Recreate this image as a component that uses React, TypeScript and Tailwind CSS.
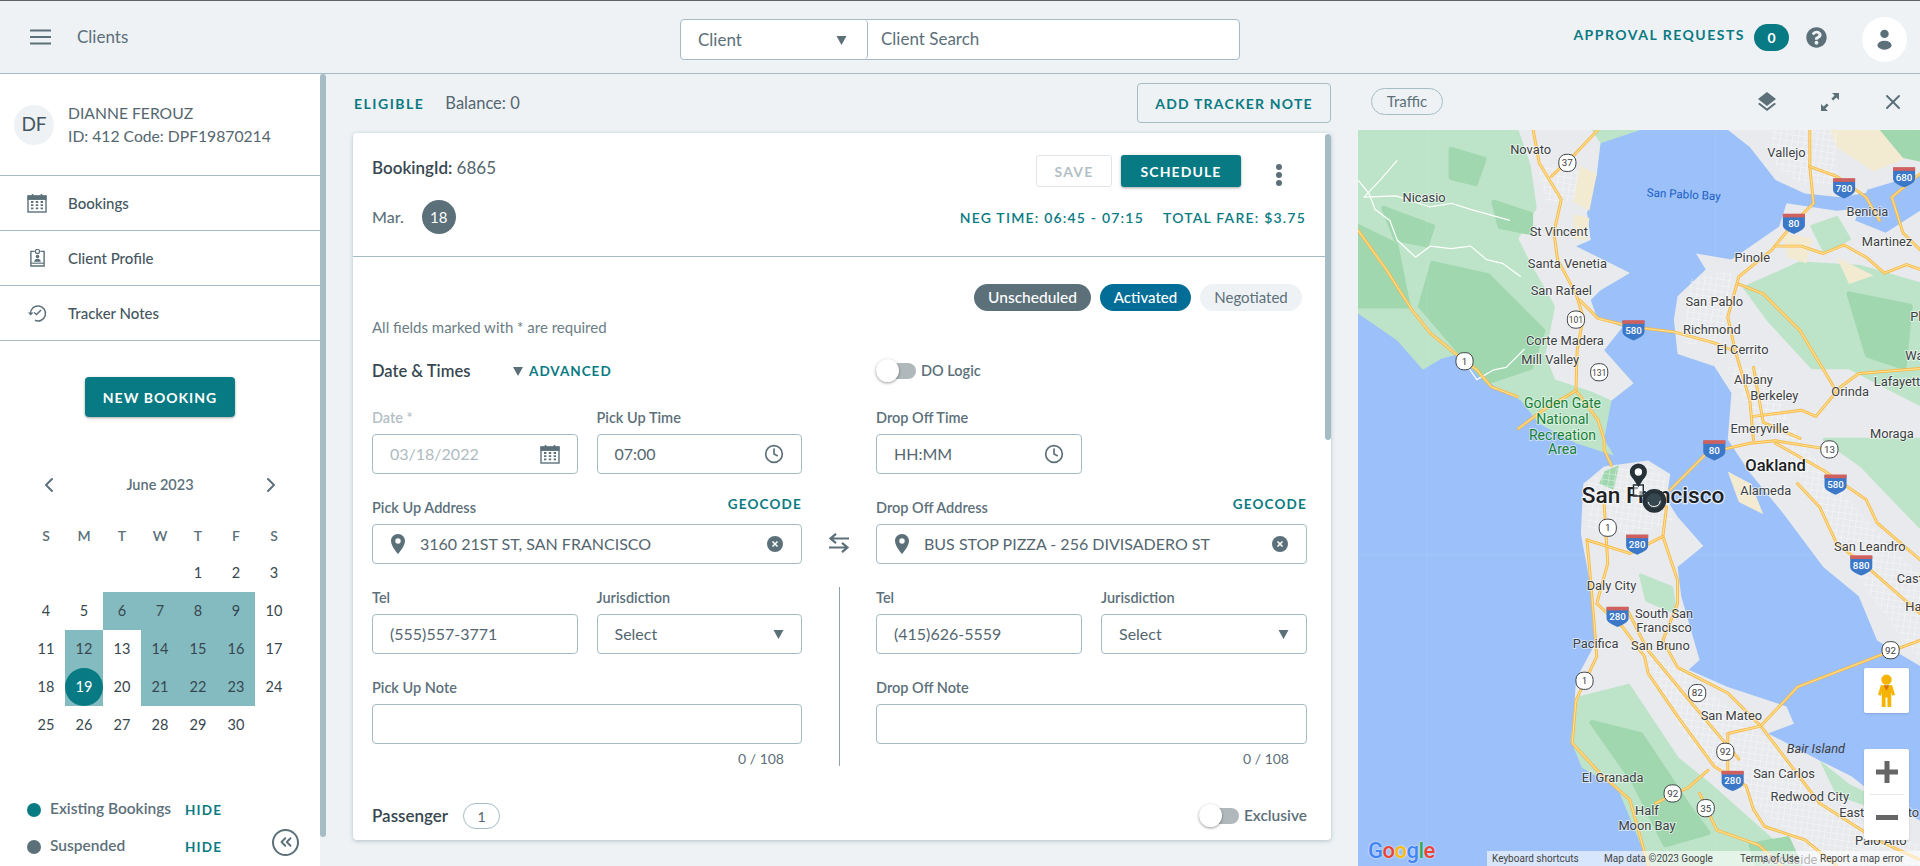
import { ChevronLeft, ChevronRight, ChevronsLeft, Clock, X } from "lucide-react";
import { FaQuestionCircle } from "react-icons/fa";
import { MdLayers } from "react-icons/md";

const weekdays = ["S", "M", "T", "W", "T", "F", "S"];
const shaded = [6, 7, 8, 9, 12, 14, 15, 16, 21, 22, 23];
const days: (number | null)[] = [
  null, null, null, null, 1, 2, 3,
  4, 5, 6, 7, 8, 9, 10,
  11, 12, 13, 14, 15, 16, 17,
  18, 19, 20, 21, 22, 23, 24,
  25, 26, 27, 28, 29, 30, null,
];

function Triangle({ className }: { className?: string }) {
  return (
    <svg viewBox="0 0 10 10" className={className}>
      <path d="M0 1h10L5 10z" fill="#5c707a" />
    </svg>
  );
}

function CalendarIcon({ className }: { className?: string }) {
  return (
    <svg viewBox="0 0 20 20" className={className} fill="none" stroke="#5c707a">
      <rect x="1" y="3" width="18" height="16" strokeWidth="1.4" />
      <rect x="1" y="3" width="18" height="3.4" fill="#5c707a" strokeWidth="1" />
      <path d="M5.5 1v3M14.5 1v3" strokeWidth="1.6" />
      <path d="M4 9h2.4M8.8 9h2.4M13.6 9h2.4M4 12.2h2.4M8.8 12.2h2.4M13.6 12.2h2.4M4 15.4h2.4M8.8 15.4h2.4M13.6 15.4h2.4" strokeWidth="1.8" />
    </svg>
  );
}

function ProfileIcon() {
  return (
    <svg viewBox="0 0 18 20" className="h-5 w-[17px]" fill="none" stroke="#5c707a">
      <path d="M6 3H2v15.5h14V3h-4" strokeWidth="1.5" />
      <rect x="7" y="1" width="4" height="4" rx="1" strokeWidth="1.3" />
      <path d="M2 15.5h14" strokeWidth="1.2" />
      <circle cx="9" cy="8.5" r="1.9" fill="#5c707a" stroke="none" />
      <path d="M5.5 14c.2-2.4 1.6-3 3.5-3s3.3.6 3.5 3z" fill="#5c707a" stroke="none" />
    </svg>
  );
}

function HistoryIcon() {
  return (
    <svg viewBox="0 0 20 20" className="h-5 w-5" fill="none" stroke="#5c707a" strokeWidth="1.5">
      <path d="M3.5 10.5A7.5 7.5 0 1 1 8 17.3" />
      <path d="M1 9.5l2.7 3 2.8-3" fill="#5c707a" stroke="none" />
      <path d="M7 9.5l2.5 2L14 7" />
    </svg>
  );
}

function PinIcon() {
  return (
    <svg viewBox="0 0 14 20" className="h-5 w-[14px] shrink-0">
      <path
        fillRule="evenodd"
        d="M7 0C3.1 0 0 3.1 0 7c0 5.2 7 13 7 13s7-7.8 7-13c0-3.9-3.1-7-7-7zm0 9.7A2.7 2.7 0 1 1 7 4.3a2.7 2.7 0 0 1 0 5.4z"
        fill="#5c707a"
      />
    </svg>
  );
}

function ClearIcon() {
  return (
    <svg viewBox="0 0 16 16" className="h-4 w-4 shrink-0">
      <circle cx="8" cy="8" r="8" fill="#5c707a" />
      <path d="M5.5 5.5l5 5M10.5 5.5l-5 5" stroke="#fff" strokeWidth="1.5" />
    </svg>
  );
}

function Toggle() {
  return (
    <div className="relative h-[16px] w-[40px] rounded-full bg-[#b0b8bc]">
      <div className="absolute left-0 top-[-4px] h-[23px] w-[23px] rounded-full bg-white shadow-[0_1px_3px_rgba(0,0,0,0.4)]" />
    </div>
  );
}

function Label({ children, muted }: { children: React.ReactNode; muted?: boolean }) {
  return (
    <div className={`flex h-5 items-center text-[14.5px] font-semibold ${muted ? "text-[#b3bfc5]" : "text-[#5c707a]"}`}>
      {children}
    </div>
  );
}

function Field({ className, children }: { className?: string; children?: React.ReactNode }) {
  return (
    <div className={`mt-1.5 flex h-10 items-center rounded-[4px] border border-[#a6bcc5] bg-white px-[17px] text-[16px] text-[#546670] ${className ?? ""}`}>
      {children}
    </div>
  );
}

function Address({ label, value }: { label: string; value: string }) {
  return (
    <div className="mt-6">
      <div className="flex items-start justify-between">
        <Label>{label}</Label>
        <span className="-mt-1 text-[13.5px] font-bold tracking-[1.2px] text-[#0a7a83]">GEOCODE</span>
      </div>
      <Field className="gap-[15px] !px-[18px]">
        <PinIcon />
        <span className="flex-1">{value}</span>
        <ClearIcon />
      </Field>
    </div>
  );
}

function ContactFields({ tel }: { tel: string }) {
  return (
    <div className="mt-6 flex gap-[19px]">
      <div className="w-[206px]">
        <Label>Tel</Label>
        <Field>{tel}</Field>
      </div>
      <div className="w-[206px]">
        <Label>Jurisdiction</Label>
        <Field className="justify-between">
          Select
          <Triangle className="h-[10px] w-[11px]" />
        </Field>
      </div>
    </div>
  );
}

function Note({ label }: { label: string }) {
  return (
    <div className="mt-6">
      <Label>{label}</Label>
      <Field />
      <div className="mt-1 flex h-5 items-center justify-end pr-[18px] text-[14px] text-[#5c707a]">0 / 108</div>
    </div>
  );
}

function Sidebar() {
  return (
    <aside className="flex w-[330px] shrink-0">
      <div className="w-[320px] bg-white">
        <div className="flex h-[102px] items-center gap-[14px] border-b border-[#a6bcc5] pl-[14px]">
          <div className="flex h-10 w-10 items-center justify-center rounded-full bg-[#eef2f5] text-[19px] text-[#45565f]">DF</div>
          <div className="text-[15.7px] leading-[23px] text-[#546670]">
            <div>DIANNE FEROUZ</div>
            <div>ID: 412 Code: DPF19870214</div>
          </div>
        </div>
        {[
          { label: "Bookings", icon: <CalendarIcon className="h-5 w-5" /> },
          { label: "Client Profile", icon: <ProfileIcon /> },
          { label: "Tracker Notes", icon: <HistoryIcon /> },
        ].map((item) => (
          <div key={item.label} className="flex h-[55px] items-center border-b border-[#a6bcc5]">
            <div className="flex w-[68px] justify-center pl-[6px]">{item.icon}</div>
            <span className="text-[15px] font-medium text-[#45565f]">{item.label}</span>
          </div>
        ))}
        <div className="mt-[36px] flex justify-center">
          <button className="h-10 w-[150px] rounded-[4px] bg-[#087a83] text-[14px] font-bold tracking-[1px] text-white shadow-[0_1px_3px_rgba(0,0,0,0.35)]">
            NEW BOOKING
          </button>
        </div>
        <div className="ml-[37px] mt-[56px] flex h-6 w-[246px] items-center justify-between">
          <ChevronLeft className="h-6 w-6 text-[#5c707a]" />
          <span className="text-[14.5px] font-semibold text-[#5c707a]">June 2023</span>
          <ChevronRight className="h-6 w-6 text-[#5c707a]" />
        </div>
        <div className="ml-[27px] mt-[19px] grid w-[266px] grid-cols-7">
          {weekdays.map((d, i) => (
            <div key={i} className="flex h-[38px] items-center justify-center text-[14px] font-semibold text-[#5c707a]">
              {d}
            </div>
          ))}
          {days.map((d, i) => (
            <div
              key={i}
              className={`flex h-[38px] items-center justify-center text-[14.5px] text-[#37474f] ${
                d !== null && (shaded.includes(d) || d === 19) ? "bg-[#84bbc0]" : ""
              }`}
            >
              {d === 19 ? (
                <span className="flex h-[38px] w-[38px] items-center justify-center rounded-full bg-[#087a83] text-white">19</span>
              ) : (
                d
              )}
            </div>
          ))}
        </div>
        <div className="ml-[27px] mt-[56px] flex h-5 items-center">
          <span className="h-[14px] w-[14px] rounded-full bg-[#087a83]" />
          <span className="ml-[9px] w-[135px] -translate-y-px text-[15.5px] font-semibold text-[#5c707a]">Existing Bookings</span>
          <span className="text-[13.5px] font-bold tracking-[1.2px] text-[#0a7a83]">HIDE</span>
        </div>
        <div className="ml-[27px] mt-[17px] flex h-5 items-center">
          <span className="h-[14px] w-[14px] rounded-full bg-[#5c707a]" />
          <span className="ml-[9px] w-[135px] -translate-y-px text-[15.5px] font-semibold text-[#5c707a]">Suspended</span>
          <span className="text-[13.5px] font-bold tracking-[1.2px] text-[#0a7a83]">HIDE</span>
          <span className="ml-auto mr-[21px] flex h-[27px] w-[27px] shrink-0 -translate-y-[5px] items-center justify-center rounded-full border-2 border-[#5c707a]">
            <ChevronsLeft className="h-[18px] w-[18px] text-[#5c707a]" strokeWidth={2.5} />
          </span>
        </div>
      </div>
      <div className="mb-[29px] w-[6px] rounded-[3px] bg-[#a6bcc5]" />
    </aside>
  );
}

function BookingCard() {
  return (
    <div className="relative mt-[10px] h-[707px] overflow-hidden rounded-[4px] bg-white shadow-[0_1px_4px_rgba(90,120,135,0.4)]">
      <div className="absolute right-0 top-px h-[306px] w-[6px] rounded-[3px] bg-[#a6bcc5]" />
      <div className="h-[124px] border-b border-[#a6bcc5] pl-[19px] pr-[25px] pt-[22px]">
        <div className="flex h-8 items-start">
          <span className="text-[17px] font-semibold text-[#37474f]">
            BookingId: <span className="font-normal text-[#546670]">6865</span>
          </span>
          <button className="ml-auto h-8 w-[76px] rounded-[3px] border border-[#dfe5e8] text-[14px] font-bold tracking-[1.2px] text-[#b3bfc5]">SAVE</button>
          <button className="ml-[9px] h-8 w-[120px] rounded-[3px] bg-[#087a83] text-[14px] font-bold tracking-[1.1px] text-white shadow-[0_1px_3px_rgba(0,0,0,0.35)]">SCHEDULE</button>
          <div className="ml-[35px] mr-[24px] flex h-8 flex-col items-center justify-center gap-[2px] pt-[8px]">
            <span className="h-[6px] w-[6px] rounded-full bg-[#5c707a]" />
            <span className="h-[6px] w-[6px] rounded-full bg-[#5c707a]" />
            <span className="h-[6px] w-[6px] rounded-full bg-[#5c707a]" />
          </div>
        </div>
        <div className="mt-[13px] flex h-[34px] items-center">
          <span className="text-[16px] font-medium text-[#5c707a]">Mar.</span>
          <span className="ml-[18px] flex h-[34px] w-[34px] items-center justify-center rounded-full bg-[#5c707a] text-[15px] text-white">18</span>
          <span className="ml-auto text-[14px] font-semibold tracking-[1.2px] text-[#0a7a83]">NEG TIME: 06:45 - 07:15</span>
          <span className="ml-[19px] text-[14px] font-semibold tracking-[1.2px] text-[#0a7a83]">TOTAL FARE: $3.75</span>
        </div>
      </div>
      <div className="pl-[18px] pr-[24px]">
        <div className="flex justify-end gap-[9px] pr-[5px] pt-[27px]">
          <span className="flex h-[27px] w-[117px] items-center justify-center rounded-full bg-[#5c707a] text-[15.5px] font-medium text-white">Unscheduled</span>
          <span className="flex h-[27px] w-[91px] items-center justify-center rounded-full bg-[#026e97] text-[15px] font-medium text-white">Activated</span>
          <span className="flex h-[27px] w-[102px] items-center justify-center rounded-full bg-[#eef2f5] text-[15px] text-[#5c707a]">Negotiated</span>
        </div>
        <div className="mt-[6px] flex h-5 items-center pl-px text-[15px] text-[#6b7d86]">All fields marked with * are required</div>
        <div className="mt-[22px] flex">
          <div className="w-[431px] pl-px">
            <div className="flex h-6 items-center">
              <span className="w-[141px] text-[16.5px] font-semibold text-[#37474f]">Date &amp; Times</span>
              <Triangle className="h-[10px] w-[10px]" />
              <span className="ml-[6px] text-[13.5px] font-bold tracking-[1px] text-[#0a7a83]">ADVANCED</span>
            </div>
            <div className="mt-[25px] flex gap-[19px]">
              <div className="w-[206px]">
                <Label muted>Date *</Label>
                <Field className="justify-between !text-[#aebbc1]">
                  03/18/2022
                  <CalendarIcon className="h-5 w-5" />
                </Field>
              </div>
              <div className="w-[206px]">
                <Label>Pick Up Time</Label>
                <Field className="justify-between">
                  07:00
                  <Clock className="h-5 w-5 text-[#5c707a]" />
                </Field>
              </div>
            </div>
            <Address label="Pick Up Address" value="3160 21ST ST, SAN FRANCISCO" />
            <ContactFields tel="(555)557-3771" />
            <Note label="Pick Up Note" />
          </div>
          <div className="flex w-[74px] flex-col items-center pt-[174px]">
            <svg viewBox="0 0 22 20" className="h-5 w-[22px]" fill="none" stroke="#5c707a" strokeWidth="2.2">
              <path d="M21 5.5H3M8 .8L2.5 5.5 8 10.2M1 14.5h18M14 9.8l5.5 4.7-5.5 4.7" />
            </svg>
            <div className="mt-[34px] h-[179px] w-px bg-[#8da3ad]" />
          </div>
          <div className="w-[431px]">
            <div className="flex h-6 items-center gap-[5px]">
              <Toggle />
              <span className="text-[14.5px] font-semibold text-[#5c707a]">DO Logic</span>
            </div>
            <div className="mt-[25px] w-[206px]">
              <Label>Drop Off Time</Label>
              <Field className="justify-between">
                HH:MM
                <Clock className="h-5 w-5 text-[#5c707a]" />
              </Field>
            </div>
            <Address label="Drop Off Address" value="BUS STOP PIZZA - 256 DIVISADERO ST" />
            <ContactFields tel="(415)626-5559" />
            <Note label="Drop Off Note" />
          </div>
        </div>
        <div className="mt-[35px] flex h-[26px] items-center pl-px">
          <span className="w-[91px] text-[17px] font-semibold text-[#37474f]">Passenger</span>
          <span className="flex h-[26px] w-[37px] items-center justify-center rounded-full border border-[#a6bcc5] text-[14px] text-[#546670]">1</span>
          <div className="ml-auto">
            <Toggle />
          </div>
          <span className="ml-[5px] text-[15.5px] font-semibold text-[#5c707a]">Exclusive</span>
        </div>
      </div>
    </div>
  );
}

const roads: string[] = [
  "1252,106 1257,133 1275,163 1269,190 1272,212 1287,240 1293,259 1288,286 1287,319 1305,343 1310,359 1310,367 1316,380",
  "1305,106 1287,125 1267,144",
  "1290,245 1305,260 1334,267 1367,271 1400,280 1414,286",
  "1478,106 1478,136 1481,166 1465,182 1447,204 1420,226 1411,259 1417,286 1429,327 1432,359",
  "1364,400 1394,370 1429,362 1450,360 1500,368",
  "1109,188 1132,220 1153,253 1168,272 1195,294 1206,302 1218,316 1239,324",
  "1478,136 1500,144 1524,161 1535,180",
  "1568,142 1545,161 1554,190 1568,204",
  "1450,201 1471,201 1489,207 1506,200 1524,210 1539,223 1557,216 1568,220",
  "1568,301 1518,305 1503,316 1483,340 1471,335 1432,340",
  "1450,362 1489,384 1524,408 1533,427 1568,457",
  "1468,395 1486,414 1500,444 1527,465 1568,501",
  "1310,411 1313,460 1304,493 1325,512 1343,536 1346,550 1370,585 1400,626 1426,642 1432,661 1441,675 1474,686 1500,707",
  "1361,414 1358,438 1370,474 1370,493 1358,523 1370,545 1411,566 1438,593 1486,656 1533,686 1568,702",
  "1568,523 1533,536 1468,561 1438,593 1411,599 1411,632",
  "1296,441 1299,474 1304,536 1287,572 1284,607 1307,632 1331,653 1346,707",
  "1296,441 1331,452 1358,438",
  "1352,656 1379,643 1395,629",
  "1388,648 1402,678 1436,690 1455,707",
  "1330,500 1345,530 1378,570 1420,620",
  "1432,300 1440,345 1470,358",
  "1287,319 1260,335 1240,350",
  "1420,232 1440,240 1470,270 1500,320",
];

const whiteRoads: string[] = [
  "1109,147 1118,158 1123,171 1135,180 1141,196 1156,210 1168,201 1185,203 1201,201 1214,212 1227,215 1242,226",
  "1141,131 1128,146 1114,161 1140,160 1168,169 1185,166 1201,171 1233,180",
  "1195,294 1206,310 1220,302 1230,300 1245,285",
];

const labels: [string, number, number][] = [
  ["Novato", 1250, 126], ["Vallejo", 1459, 128], ["Nicasio", 1163, 165], ["Benicia", 1525, 176],
  ["Martinez", 1541, 201], ["St Vincent", 1273, 193], ["Pinole", 1431, 214], ["Santa Venetia", 1280, 219],
  ["San Rafael", 1275, 241], ["San Pablo", 1400, 250], ["Richmond", 1398, 273], ["Corte Madera", 1278, 282],
  ["El Cerrito", 1423, 289], ["Mill Valley", 1266, 297], ["Albany", 1432, 314], ["Berkeley", 1449, 327],
  ["Orinda", 1511, 323], ["Lafayette", 1552, 315], ["Emeryville", 1437, 354], ["Moraga", 1545, 358],
  ["Alameda", 1442, 404], ["San Leandro", 1527, 450], ["Daly City", 1316, 482], ["South San", 1359, 505],
  ["Francisco", 1359, 516], ["Pacifica", 1303, 529], ["San Bruno", 1356, 531], ["San Mateo", 1414, 588],
  ["San Carlos", 1457, 635], ["Redwood City", 1478, 654], ["Palo Alto", 1536, 690], ["El Granada", 1317, 639],
  ["Half", 1345, 666], ["Moon Bay", 1345, 678], ["Woodside", 1461, 706],
];

const startLabels: [string, number, number][] = [
  ["Pleasant Hill", 1560, 262], ["Walnut Creek", 1556, 294], ["Castro Valley", 1549, 476], ["Hayward", 1556, 499], ["East Palo Alto", 1502, 667],
];

const parkLabels: [string, number, number][] = [
  ["Golden Gate", 1276, 333], ["National", 1276, 346], ["Recreation", 1276, 359], ["Area", 1276, 371],
];

const stateShields: [string, number, number][] = [
  ["37", 1280, 133], ["101", 1287, 261], ["1", 1196, 295], ["131", 1306, 304], ["13", 1494, 367], ["1", 1313, 431],
  ["92", 1544, 531], ["1", 1294, 556], ["82", 1386, 566], ["92", 1409, 614], ["92", 1366, 648], ["35", 1393, 660],
];

const interstates: [string, number, number][] = [
  ["580", 1334, 269], ["80", 1465, 182], ["780", 1506, 153], ["680", 1555, 144], ["80", 1400, 367], ["580", 1499, 395],
  ["280", 1337, 444], ["880", 1520, 461], ["280", 1321, 503], ["280", 1415, 637],
];

const LIGHT_GREEN = "#bde4c8";
const DARK_GREEN = "#a0d7af";

function MapArt() {
  return (
    <svg viewBox="1109 106.2 459 601" className="h-full w-full font-['Roboto',sans-serif]">
      <defs>
        <pattern id="streets" width="5" height="5" patternUnits="userSpaceOnUse" patternTransform="rotate(8)">
          <path d="M0 0H5M0 0V5" stroke="#ffffff" strokeWidth="0.7" />
        </pattern>
      </defs>
      <rect x="1109" y="106" width="459" height="602" fill="#9cc0f9" />
      {/* marin */}
      <path d="M1109 106H1340L1307 117 1304 142 1296 174 1299 196 1287 201 1331 223 1307 237 1299 245 1304 259 1325 267 1310 286 1334 313 1316 327 1310 359 1318 372 1287 362 1257 346 1242 327 1221 316 1203 300 1192 289 1177 293 1162 302 1141 278 1109 256Z" fill={LIGHT_GREEN} />
      <path d="M1240 106H1300L1307 117 1304 142 1296 174 1299 196 1287 201 1331 223 1307 237 1299 245 1304 259 1325 267 1310 286 1334 313 1316 327 1300 320 1270 310 1262 290 1270 250 1250 215 1240 195 1255 170 1250 135Z" fill="#e8eaed" />
      <path d="M1170 215L1215 225 1260 270 1250 300 1215 312 1190 285 1160 250ZM1185 122L1212 130 1205 150 1185 145ZM1220 165L1250 175 1250 190 1225 185ZM1109 185L1140 200 1150 250 1109 250ZM1130 170L1170 185 1165 200 1140 195Z" fill={DARK_GREEN} stroke={DARK_GREEN} strokeWidth="4" strokeLinejoin="round" />
      <path d="M1290 135L1304 142 1298 172 1285 165ZM1285 175L1298 178 1296 196 1285 195Z" fill="#f3ead2" />
      {/* east bay */}
      <path d="M1411 106H1568V150L1503 161 1474 158 1450 147 1429 120Z" fill="#e8eaed" />
      <path d="M1459 166L1500 172 1568 165V544L1533 523 1518 487 1489 463 1456 419 1429 386 1411 359 1414 321 1400 299 1370 289 1367 261 1370 242 1393 220 1385 207 1414 212 1453 185Z" fill="#e8eaed" />
      <path d="M1470 215L1520 218 1568 232V330L1510 300 1480 300 1445 262 1425 235ZM1490 359L1520 380 1568 430V359ZM1480 185L1500 178 1510 195 1490 205Z" fill={LIGHT_GREEN} stroke={LIGHT_GREEN} strokeWidth="3" strokeLinejoin="round" />
      <path d="M1510 240L1560 250 1555 300 1525 290ZM1535 106H1568V130L1545 125Z" fill={DARK_GREEN} stroke={DARK_GREEN} strokeWidth="4" strokeLinejoin="round" />
      <path d="M1495 106H1535L1555 130 1530 140 1500 120ZM1455 190L1480 195 1475 215 1460 210ZM1500 210L1530 225 1510 232ZM1411 385L1430 395 1440 420 1420 410Z" fill="#f3ead2" />
      <path d="M1525 155L1568 142V172L1540 190 1515 180ZM1476 165L1510 160 1500 170Z" fill="#9cc0f9" />
      {/* peninsula */}
      <path d="M1310 381L1346 376 1364 387 1361 408 1370 422 1391 446 1370 463 1373 487 1388 539 1379 547 1411 561 1459 577 1465 591 1444 599 1486 621 1512 634 1536 653 1568 670V707H1349L1340 686 1322 642 1293 626 1284 604 1287 555 1304 523 1299 479 1291 436 1293 395Z" fill="#e8eaed" />
      <path d="M1290 570L1330 560 1370 620 1395 640 1440 680 1470 707H1349L1340 686 1322 642 1293 626 1284 604ZM1340 470L1365 480 1368 500 1345 490Z" fill={LIGHT_GREEN} stroke={LIGHT_GREEN} strokeWidth="3" strokeLinejoin="round" />
      <path d="M1300 590L1340 600 1380 660 1395 680 1360 690 1335 640ZM1430 690L1460 685 1470 707H1435Z" fill={DARK_GREEN} stroke={DARK_GREEN} strokeWidth="4" strokeLinejoin="round" />
      <path d="M1486 621L1510 640 1530 650 1530 660 1500 650Z" fill={LIGHT_GREEN} />
      <path d="M1310 385L1322 380 1318 400 1306 395Z" fill={DARK_GREEN} />
      {/* street grids */}
      <path
        d="M1296 395L1310 384 1346 379 1361 390 1359 408 1366 425 1340 436 1296 432ZM1410 300L1435 345 1455 358 1475 400 1500 440 1530 490 1560 530 1568 540V470L1520 420 1470 360 1440 300ZM1340 530L1375 548 1440 600 1500 665 1568 690V707H1490L1420 645 1375 600ZM1380 228L1415 220 1405 280 1375 282ZM1445 106H1500V150L1470 150 1450 135ZM1255 130L1290 140 1285 165 1262 165Z"
        fill="url(#streets)"
        opacity="0.75"
      />
      <path d="M1165.5 106V707M1401 106V707M1109 453H1568" stroke="#ffffff" strokeOpacity="0.12" strokeWidth="0.6" />
      {whiteRoads.map((p) => (
        <polyline key={p} points={p} fill="none" stroke="#ffffff" strokeWidth="1" strokeLinejoin="round" />
      ))}
      {roads.map((p) => (
        <g key={p} fill="none" strokeLinejoin="round" strokeLinecap="round">
          <polyline points={p} stroke="#f9b949" strokeWidth="2.4" />
          <polyline points={p} stroke="#fde293" strokeWidth="0.9" />
        </g>
      ))}
      {labels.map(([t, x, y]) => (
        <text key={t} x={x} y={y} textAnchor="middle" fontSize="10.5" fill="#3c4043" stroke="#ffffff" strokeWidth="1.5" strokeOpacity="0.6" paintOrder="stroke">
          {t}
        </text>
      ))}
      {startLabels.map(([t, x, y]) => (
        <text key={t} x={x} y={y} fontSize="10.5" fill="#3c4043" stroke="#ffffff" strokeWidth="1.5" strokeOpacity="0.6" paintOrder="stroke">
          {t}
        </text>
      ))}
      {parkLabels.map(([t, x, y]) => (
        <text key={t} x={x} y={y} textAnchor="middle" fontSize="11.5" fill="#188038" stroke="#ffffff" strokeWidth="1.5" strokeOpacity="0.5" paintOrder="stroke">
          {t}
        </text>
      ))}
      <text x="1375" y="162" textAnchor="middle" fontSize="9.5" fill="#1a5fc4" transform="rotate(3 1375 159)">San Pablo Bay</text>
      <text x="1483" y="615" textAnchor="middle" fontSize="10.5" fontStyle="italic" fill="#3c4043">Bair Island</text>
      <text x="1450" y="385" textAnchor="middle" fontSize="13.5" fontWeight="500" fill="#202124" stroke="#ffffff" strokeWidth="2" strokeOpacity="0.7" paintOrder="stroke">Oakland</text>
      <text x="1350" y="411" textAnchor="middle" fontSize="18.5" fontWeight="500" fill="#202124" stroke="#ffffff" strokeWidth="2" strokeOpacity="0.7" paintOrder="stroke">San Francisco</text>
      {stateShields.map(([t, x, y], i) => (
        <g key={i}>
          <rect x={x - 7} y={y - 7} width="14" height="14" rx="6" fill="#ffffff" stroke="#3c4043" strokeWidth="0.8" />
          <text x={x} y={y + 2.8} textAnchor="middle" fontSize={t.length > 2 ? 7 : 8} fill="#3c4043">{t}</text>
        </g>
      ))}
      {interstates.map(([t, x, y], i) => (
        <g key={i}>
          <path d={`M${x - 9} ${y - 7}h18v9c0 3-4 5-9 7-5-2-9-4-9-7z`} fill="#3c78c8" />
          <path d={`M${x - 9} ${y - 7.5}h18v3h-18z`} fill="#d0605e" />
          <text x={x} y={y + 3.5} textAnchor="middle" fontSize="8" fontWeight="500" fill="#ffffff">{t}</text>
        </g>
      ))}
      <path d="M1334 396h8v9h-8z" fill="#ffffff" fillOpacity="0.6" stroke="#263238" strokeWidth="1.2" />
      <path d="M1332.5 389L1338 398 1343.5 389" fill="#263238" />
      <circle cx="1338" cy="385.5" r="5" fill="#ffffff" stroke="#263238" strokeWidth="4" />
      <circle cx="1351" cy="409" r="8" fill="#37474f" stroke="#263238" strokeWidth="3.5" />
      <path d="M1346 410a5 5 0 0 0 9.8 -1" fill="none" stroke="#ffffff" strokeWidth="0.8" />
    </svg>
  );
}

function MapPanel() {
  return (
    <section className="flex w-[562px] shrink-0 flex-col">
      <div className="flex h-[56px] items-center justify-between pb-[1px] pl-[13px] pr-[15px]">
        <span className="flex h-[27px] w-[72px] items-center justify-center rounded-full border border-[#a6bcc5] text-[15px] text-[#5c707a]">Traffic</span>
        <div className="flex items-center gap-[39px] text-[#5c707a]">
          <MdLayers className="h-6 w-6" />
          <svg viewBox="0 0 24 24" className="h-6 w-6" fill="#5c707a">
            <path d="M14 3h7v7l-2.6-2.6-3.2 3.2-1.8-1.8 3.2-3.2zM10 21H3v-7l2.6 2.6 3.2-3.2 1.8 1.8-3.2 3.2z" />
          </svg>
          <X className="h-6 w-6" strokeWidth={2} />
        </div>
      </div>
      <div className="relative flex-1 overflow-hidden bg-[#9cc0f9]">
        <MapArt />
        <div className="absolute left-[506px] top-[538px] flex h-[45px] w-[45px] items-center justify-center rounded-[2px] bg-white shadow">
          <svg viewBox="0 0 20 36" className="h-[34px] w-[19px]">
            <circle cx="10" cy="6" r="5.5" fill="#f5b400" />
            <path d="M4 12h12l3 10-3 1-1-4v16h-4V25H9v10H5V19l-1 4-3-1z" fill="#f5b400" />
            <path d="M7 12h6l-3 6z" fill="#d9731a" />
          </svg>
        </div>
        <div className="absolute left-[506px] top-[619px] flex h-[91px] w-[45px] flex-col items-center rounded-[2px] bg-white shadow">
          <div className="flex h-[45px] w-full items-center justify-center">
            <svg viewBox="0 0 22 22" className="h-[22px] w-[22px]"><path d="M8.5 0h5v8.5H22v5h-8.5V22h-5v-8.5H0v-5h8.5z" fill="#666666" /></svg>
          </div>
          <div className="h-px w-[34px] bg-[#e6e6e6]" />
          <div className="flex h-[45px] w-full items-center justify-center">
            <div className="h-[5px] w-[22px] bg-[#666666]" />
          </div>
        </div>
        <div className="absolute bottom-[4px] left-[10px] font-['Roboto',sans-serif] text-[22px] font-medium leading-none tracking-[-0.5px] [text-shadow:0_0_2px_#fff]">
          <span className="text-[#4285f4]">G</span>
          <span className="text-[#ea4335]">o</span>
          <span className="text-[#fbbc05]">o</span>
          <span className="text-[#4285f4]">g</span>
          <span className="text-[#34a853]">l</span>
          <span className="text-[#ea4335]">e</span>
        </div>
        <div className="absolute bottom-0 right-0 flex h-[15px] w-[433px] items-center bg-white/60 pl-[5px] font-['Roboto',sans-serif] text-[10px] text-[#444444]">
          <span className="w-[112px]">Keyboard shortcuts</span>
          <span className="w-[136px]">Map data ©2023 Google</span>
          <span className="w-[80px]">Terms of Use</span>
          <span>Report a map error</span>
        </div>
      </div>
    </section>
  );
}

export default function App() {
  return (
    <div className="flex h-[866px] flex-col overflow-hidden bg-[#eef2f5] font-['Lato','Liberation_Sans',sans-serif]">
      <header className="flex h-[74px] shrink-0 items-center border-b border-t border-b-[#a6bcc5] border-t-[#5f6368]">
        <div className="flex w-[680px] items-center pl-[30px]">
          <svg viewBox="0 0 21 16" className="h-4 w-[21px]" stroke="#5c707a" strokeWidth="2.2">
            <path d="M0 1.5h21M0 8h21M0 14.5h21" />
          </svg>
          <span className="ml-[26px] text-[17px] text-[#5c707a]">Clients</span>
        </div>
        <div className="mt-[5px] flex h-[41px] w-[560px] rounded-[4px] border border-[#a6bcc5] bg-white text-[17px] text-[#5c707a]">
          <div className="flex w-[187px] items-center justify-between rounded-[4px] border-r border-[#a6bcc5] pl-[17px] pr-[20px]">
            Client
            <Triangle className="h-[10px] w-[11px]" />
          </div>
          <div className="flex items-center pb-[2px] pl-[13px]">Client Search</div>
        </div>
        <div className="ml-auto flex items-center pr-[13px]">
          <span className="-translate-y-[3px] text-[14px] font-bold tracking-[1.5px] text-[#0a7a83]">APPROVAL REQUESTS</span>
          <span className="ml-[9px] flex h-[27px] w-[35px] items-center justify-center rounded-full bg-[#087a83] text-[14px] font-bold text-white">0</span>
          <FaQuestionCircle className="ml-[17px] h-[21px] w-[21px] text-[#5c707a]" />
          <span className="ml-[35px] mt-[5px] flex h-[45px] w-[45px] items-center justify-center rounded-full bg-white">
            <svg viewBox="0 0 16 22" className="h-[21px] w-[15px]" fill="#5c707a">
              <circle cx="8" cy="5" r="4.5" />
              <ellipse cx="8" cy="17" rx="7.5" ry="4.8" />
            </svg>
          </span>
        </div>
      </header>
      <div className="flex flex-1">
        <Sidebar />
        <main className="w-[1028px] shrink-0 pl-[23px] pr-[27px]">
          <div className="mt-[9px] flex h-10 items-center">
            <span className="pl-px text-[14px] font-bold tracking-[1.5px] text-[#0a7a83]">ELIGIBLE</span>
            <span className="ml-[21px] text-[16.5px] text-[#546670]">Balance: 0</span>
            <button className="ml-auto h-10 w-[194px] rounded-[4px] border border-[#a6bcc5] text-[14px] font-bold tracking-[1.2px] text-[#0a7a83]">ADD TRACKER NOTE</button>
          </div>
          <BookingCard />
        </main>
        <MapPanel />
      </div>
    </div>
  );
}
